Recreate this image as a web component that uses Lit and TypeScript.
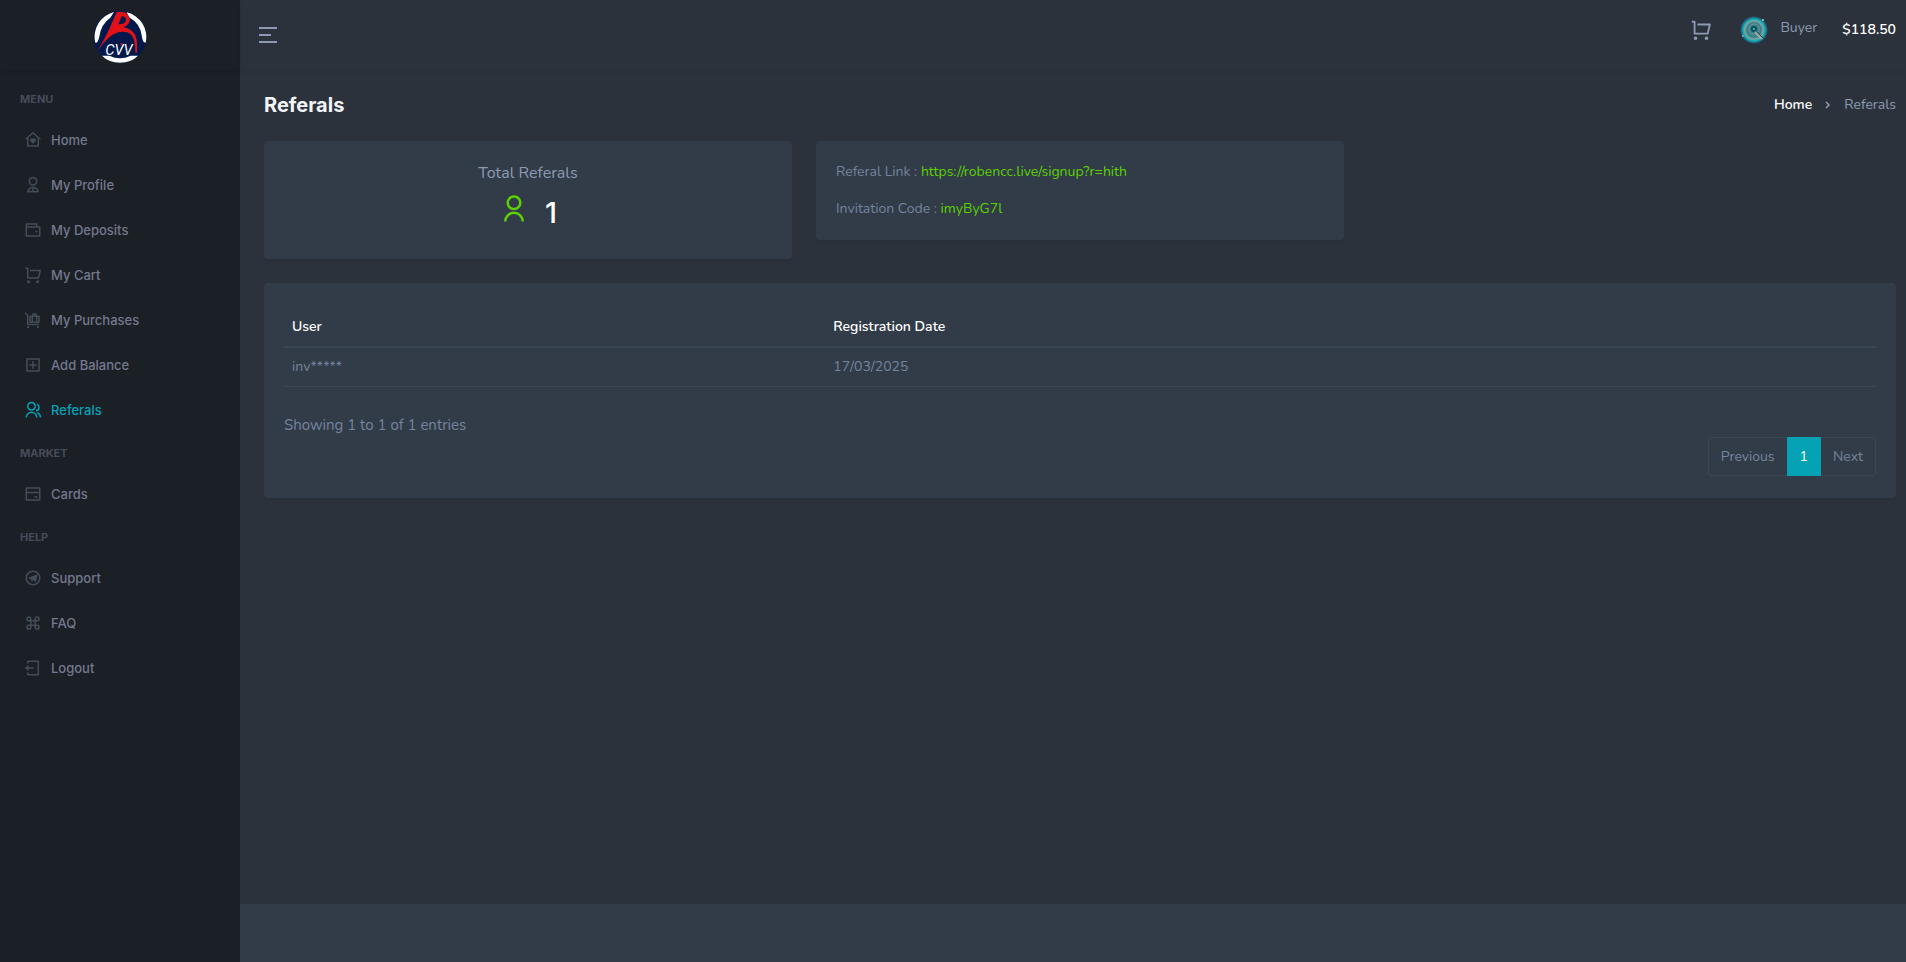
import { LitElement, html, css } from "lit";
import { customElement } from "lit/decorators.js";
import { classMap } from "lit/directives/class-map.js";

const ICONS: Record<string, string> = {
  home: "M20 20a1 1 0 0 1-1 1H5a1 1 0 0 1-1-1v-9H1l10.327-9.388a1 1 0 0 1 1.346 0L23 11h-3v9zm-2-1V9.157l-6-5.454-6 5.454V19h12zm-6-2l-3.359-3.359a2.25 2.25 0 1 1 3.182-3.182l.177.177.177-.177a2.25 2.25 0 1 1 3.182 3.182L12 17z",
  profile: "M4 22a8 8 0 1 1 16 0H4zm9-5.917V20h4.659A6.009 6.009 0 0 0 13 16.083zM11 20v-3.917A6.009 6.009 0 0 0 6.341 20H11zm1-7c-3.315 0-6-2.685-6-6s2.685-6 6-6 6 2.685 6 6-2.685 6-6 6zm0-2c2.21 0 4-1.79 4-4s-1.79-4-4-4-4 1.79-4 4 1.79 4 4 4z",
  wallet: "M18 7h3a1 1 0 0 1 1 1v12a1 1 0 0 1-1 1H3a1 1 0 0 1-1-1V4a1 1 0 0 1 1-1h15v4zM4 9v10h16V9H4zm0-4v2h12V5H4zm11 8h3v2h-3v-2z",
  cart: "M4 16V4H2V2h3a1 1 0 0 1 1 1v12h12.438l2-8H8V5h13.72a1 1 0 0 1 .97 1.243l-2.5 10a1 1 0 0 1-.97.757H5a1 1 0 0 1-1-1zm2 7a2 2 0 1 1 0-4 2 2 0 0 1 0 4zm12 0a2 2 0 1 1 0-4 2 2 0 0 1 0 4z",
  luggage: "M5.5 20c.828 0 1.5.672 1.5 1.5S6.328 23 5.5 23 4 22.328 4 21.5 4.672 20 5.5 20zm13 0c.828 0 1.5.672 1.5 1.5s-.672 1.5-1.5 1.5-1.5-.672-1.5-1.5.672-1.5 1.5-1.5zM2.172 1.757l3.827 3.828V17L20 17v2H5c-.552 0-1-.448-1-1V6.413L.756 3.172l1.415-1.415zM16 3c.552 0 1 .448 1 1v2h2.993C20.55 6 21 6.456 21 6.995v8.01c0 .55-.45.995-1.007.995H8.007C7.45 16 7 15.544 7 15.005v-8.01C7 6.445 7.45 6 8.007 6h2.992L11 4c0-.552.448-1 1-1h4zm-6 5H9v6h1V8zm6 0h-4v6h4V8zm3 0h-1v6h1V8zm-4-3h-2v1h2V5z",
  add: "M4 3h16a1 1 0 0 1 1 1v16a1 1 0 0 1-1 1H4a1 1 0 0 1-1-1V4a1 1 0 0 1 1-1zm1 2v14h14V5H5zm6 6V7h2v4h4v2h-4v4h-2v-4H7v-2h4z",
  group: "M2 22a8 8 0 1 1 16 0h-2a6 6 0 1 0-12 0H2zm8-9c-3.315 0-6-2.685-6-6s2.685-6 6-6 6 2.685 6 6-2.685 6-6 6zm0-2c2.21 0 4-1.79 4-4s-1.79-4-4-4-4 1.79-4 4 1.79 4 4 4zm8.284 3.703A8.002 8.002 0 0 1 23 22h-2a6.001 6.001 0 0 0-3.537-5.473l.82-1.824zm-.688-11.29A5.5 5.5 0 0 1 21 8.5a5.499 5.499 0 0 1-5 5.478v-2.013a3.5 3.5 0 0 0 1.041-6.609l.555-1.943z",
  card: "M3 3h18a1 1 0 0 1 1 1v16a1 1 0 0 1-1 1H3a1 1 0 0 1-1-1V4a1 1 0 0 1 1-1zm17 8H4v8h16v-8zm0-2V5H4v4h16zm-6 6h4v2h-4v-2z",
  telegram: "M12 20a8 8 0 1 0 0-16 8 8 0 0 0 0 16zm0 2C6.477 22 2 17.523 2 12S6.477 2 12 2s10 4.477 10 10-4.477 10-10 10zM5.8 11.8L17 7.3c.6-.2 1 .1.9.8l-1.8 8.3c-.2.7-.6.8-1.1.5l-2.8-2.1-1.5 1.4c-.4.4-.8.3-.9-.2l-.8-2.7-3.2-1z",
  command: "M10 8h4V6.5a3.5 3.5 0 1 1 3.5 3.5H16v4h1.5a3.5 3.5 0 1 1-3.5 3.5V16h-4v1.5A3.5 3.5 0 1 1 6.5 14H8v-4H6.5A3.5 3.5 0 1 1 10 6.5V8zM8 8V6.5A1.5 1.5 0 1 0 6.5 8H8zm0 8H6.5A1.5 1.5 0 1 0 8 17.5V16zm8-8h1.5A1.5 1.5 0 1 0 16 6.5V8zm0 8v1.5a1.5 1.5 0 1 0 1.5-1.5H16zm-6-6v4h4v-4h-4z",
  logout: "M4 18h2v2h12V4H6v2H4V3a1 1 0 0 1 1-1h14a1 1 0 0 1 1 1v18a1 1 0 0 1-1 1H5a1 1 0 0 1-1-1v-3zm2-7h7v2H6v3l-5-4 5-4v3z",
  user: "M4 22a8 8 0 1 1 16 0h-2a6 6 0 1 0-12 0H4zm8-9c-3.315 0-6-2.685-6-6s2.685-6 6-6 6 2.685 6 6-2.685 6-6 6zm0-2c2.21 0 4-1.79 4-4s-1.79-4-4-4-4 1.79-4 4 1.79 4 4 4z",
};

const icon = (name: string, size: number) => html`
  <svg class="icon" width=${size} height=${size} viewBox="0 0 24 24" aria-hidden="true">
    <path d=${ICONS[name]}></path>
  </svg>`;

const SECTIONS = [
  {
    title: "MENU",
    items: [
      ["home", "Home"],
      ["profile", "My Profile"],
      ["wallet", "My Deposits"],
      ["cart", "My Cart"],
      ["luggage", "My Purchases"],
      ["add", "Add Balance"],
      ["group", "Referals"],
    ],
  },
  { title: "MARKET", items: [["card", "Cards"]] },
  {
    title: "HELP",
    items: [
      ["telegram", "Support"],
      ["command", "FAQ"],
      ["logout", "Logout"],
    ],
  },
];

const REFERRALS = [{ user: "inv*****", date: "17/03/2025" }];

const logo = html`
  <svg width="54" height="54" viewBox="279 30 162 162" aria-hidden="true">
    <circle cx="360" cy="111" r="79" fill="#03194b"></circle>
    <g fill="#fff">
      <path d="M342 36A76 76 0 0 0 286 128L289 128Q295 124 298 110Q303 72 331 53Z"></path>
      <path d="M380 37A76 76 0 0 1 437 128L431 126Q426 118 425 106Q420 70 387 52Z"></path>
      <path d="M306 167H328Q360 182 392 167H414Q395 187 360 188Q325 187 306 167Z"></path>
    </g>
    <path fill="#e01218" fill-rule="evenodd" d="M350 37Q372 31 383 43Q395 60 384 73Q379 79 370 81Q396 86 406 106Q413 124 411 158H406Q406 118 394 105Q380 91 354 97Q325 106 292 154Q310 124 326 91ZM365 49L355 73Q372 74 377 64Q382 50 365 49Z"></path>
    <text x="357" y="164" text-anchor="middle" font-family="Roboto, sans-serif" font-size="44" font-style="italic" fill="#fff">CVV</text>
    <path fill="#e01218" d="M360 130h8l-4 7z"></path>
  </svg>`;

const avatar = html`
  <svg width="28" height="28" viewBox="0 0 28 28" aria-hidden="true">
    <defs>
      <radialGradient id="glow">
        <stop offset="0.7" stop-color="#1cc5cb"></stop>
        <stop offset="0.85" stop-color="#178a98"></stop>
        <stop offset="1" stop-color="#2b2f48"></stop>
      </radialGradient>
    </defs>
    <circle cx="14" cy="14" r="14" fill="url(#glow)"></circle>
    <circle cx="14" cy="14" r="9" fill="#35848c" stroke="#7d9a9a" stroke-width="2"></circle>
    <circle cx="14" cy="13" r="5" fill="#24808a" stroke="#84938f" stroke-width="1"></circle>
    <circle cx="14" cy="13" r="3" fill="#164d59"></circle>
    <circle cx="14" cy="13" r="1" fill="#27d3d3"></circle>
    <path d="M15 16l7 7" stroke="#a2a8a3" stroke-width="2"></path>
    <path d="M17 16l6 6" stroke="#23404b" stroke-width="1"></path>
    <circle cx="23" cy="4" r="1" fill="#a9c9d4"></circle>
    <circle cx="3" cy="20" r="1" fill="#6dbac4"></circle>
  </svg>`;

@customElement("app-root")
export class AppRoot extends LitElement {
  static styles = css`
    :host {
      display: block;
      --accent: #05a2b6;
      --green: #5dd100;
      --muted: #76839d;
      --soft: #8d9ab2;
      --card: #313c48;
      --line: #3a4653;
      font: 400 14px/22px "Nunito", "Open Sans", sans-serif;
      color: var(--muted);
    }
    * { box-sizing: border-box; }
    a { color: inherit; text-decoration: none; }
    button {
      display: flex;
      align-items: center;
      padding: 0;
      border: 0;
      background: none;
      font: inherit;
      color: inherit;
      cursor: pointer;
    }
    .icon { fill: currentColor; display: block; flex: none; }
    .shell {
      display: grid;
      grid-template-columns: 240px 1fr;
      min-height: 100vh;
      background: #2b323b;
    }

    .sidebar { background: #1b1f26; }
    .brand {
      height: 70px;
      display: flex;
      justify-content: center;
      align-items: center;
      padding-top: 4px;
      box-shadow: 0 2px 4px rgba(0, 0, 0, 0.06);
    }
    .nav { padding-top: 8px; font-family: "Inter", sans-serif; }
    .nav h2 {
      margin: 0;
      padding: 12px 20px 9px;
      font-size: 11px;
      line-height: 18px;
      font-weight: 700;
      color: #464c59;
    }
    .nav ul { list-style: none; margin: 0; padding: 0; }
    .nav a {
      display: flex;
      align-items: center;
      gap: 9px;
      height: 45px;
      padding-left: 24px;
      font-size: 13px;
      font-weight: 500;
      color: #74788d;
    }
    .nav .icon { color: #434d59; }
    .nav a.active, .nav a.active .icon { color: var(--accent); }

    .page { display: flex; flex-direction: column; min-width: 0; }
    .topbar {
      height: 70px;
      display: flex;
      justify-content: space-between;
      padding: 0 10px 0 19px;
      color: var(--soft);
      box-shadow: 0 2px 4px rgba(0, 0, 0, 0.04);
    }
    .tools { display: flex; align-items: flex-start; padding-top: 15px; }
    .tools > * { height: 30px; }
    .cart { margin-right: 28px; }
    .user { gap: 12px; margin-right: 25px; }
    .user span { padding-bottom: 4px; }
    .balance { color: #fff; font-weight: 600; line-height: 30px; }

    main { flex: 1; padding: 24px 10px 24px 24px; }
    .heading {
      display: flex;
      justify-content: space-between;
      align-items: center;
      margin-bottom: 25px;
    }
    h1 { margin: 0; font: 700 20px/22px "Inter", sans-serif; color: #f3f5f8; }
    .crumbs { display: flex; align-items: center; gap: 13px; color: var(--soft); }
    .crumbs a { color: #fff; font-weight: 600; }
    .chevron { fill: none; stroke: currentColor; stroke-width: 1.5; }

    .cards {
      display: grid;
      grid-template-columns: repeat(3, 1fr);
      gap: 24px;
      align-items: start;
      margin-bottom: 24px;
    }
    .card {
      padding: 20px 20px 22px;
      border-radius: 4px;
      background: var(--card);
      box-shadow: 0 2px 3px rgba(0, 0, 0, 0.06);
    }
    .total {
      padding-bottom: 28px;
      text-align: center;
      font-size: 16px;
      line-height: 24px;
      color: var(--soft);
    }
    .count {
      display: flex;
      justify-content: center;
      align-items: center;
      gap: 16px;
      padding-top: 2px;
      color: var(--green);
    }
    .count strong {
      padding-top: 8px;
      font: 500 29px/36px "Inter", sans-serif;
      color: #fff;
    }
    .links { padding-bottom: 20px; }
    .links p { margin: 0 0 15px; }
    .links p:last-child { margin: 0; }
    .links a, .links .code { color: var(--green); }

    table {
      width: 100%;
      margin-top: 3px;
      border-collapse: separate;
      border-spacing: 0;
      table-layout: fixed;
    }
    th, td { padding: 8px; text-align: left; border-bottom: 1px solid var(--line); }
    th {
      padding-top: 10px;
      color: #fff;
      font-weight: 600;
      border-bottom-width: 2px;
    }
    th:first-child { width: 34%; }
    .info { margin: 27px 0 1px; font-size: 15px; }
    .pager {
      display: flex;
      width: max-content;
      margin-left: auto;
    }
    .pager button {
      height: 39px;
      padding: 0 12px;
      border: 1px solid var(--line);
    }
    .pager .prev { border-right: 0; border-radius: 4px 0 0 4px; }
    .pager .next { border-left: 0; border-radius: 0 4px 4px 0; }
    .pager .current { background: var(--accent); border-color: var(--accent); color: #fff; }
    footer { height: 58px; background: var(--card); }
  `;

  render() {
    return html`
      <div class="shell">
        <aside class="sidebar">
          <a class="brand" href="#" aria-label="Home">${logo}</a>
          <nav class="nav">
            ${SECTIONS.map(
              (section) => html`
                <h2>${section.title}</h2>
                <ul>
                  ${section.items.map(
                    ([glyph, label]) => html`
                      <li>
                        <a href="#" class=${classMap({ active: label === "Referals" })}>
                          ${icon(glyph, 18)}<span>${label}</span>
                        </a>
                      </li>`
                  )}
                </ul>`
            )}
          </nav>
        </aside>
        <div class="page">
          <header class="topbar">
            <button aria-label="Toggle menu">
              <svg width="18" height="16" viewBox="0 0 18 16" fill="currentColor">
                <path d="M0 0h18v2H0zM0 7h12v2H0zM0 14h18v2H0z"></path>
              </svg>
            </button>
            <div class="tools">
              <button class="cart" aria-label="Cart">${icon("cart", 22)}</button>
              <button class="user">${avatar}<span>Buyer</span></button>
              <span class="balance">$118.50</span>
            </div>
          </header>
          <main>
            <div class="heading">
              <h1>Referals</h1>
              <nav class="crumbs" aria-label="Breadcrumb">
                <a href="#">Home</a>
                <svg class="chevron" width="6" height="8" viewBox="0 0 6 8" aria-hidden="true"><path d="M1 1l3 3-3 3"></path></svg>
                <span>Referals</span>
              </nav>
            </div>
            <div class="cards">
              <section class="card total">
                <div>Total Referals</div>
                <div class="count">${icon("user", 30)}<strong>1</strong></div>
              </section>
              <section class="card links">
                <p>Referal Link : <a href="#">https://robencc.live/signup?r=hith</a></p>
                <p>Invitation Code : <span class="code">imyByG7l</span></p>
              </section>
            </div>
            <section class="card">
              <table>
                <thead>
                  <tr><th scope="col">User</th><th scope="col">Registration Date</th></tr>
                </thead>
                <tbody>
                  ${REFERRALS.map((r) => html`<tr><td>${r.user}</td><td>${r.date}</td></tr>`)}
                </tbody>
              </table>
              <p class="info">Showing 1 to 1 of 1 entries</p>
              <div class="pager">
                <button class="prev">Previous</button>
                <button class="current" aria-current="page">1</button>
                <button class="next">Next</button>
              </div>
            </section>
          </main>
          <footer></footer>
        </div>
      </div>`;
  }
}
